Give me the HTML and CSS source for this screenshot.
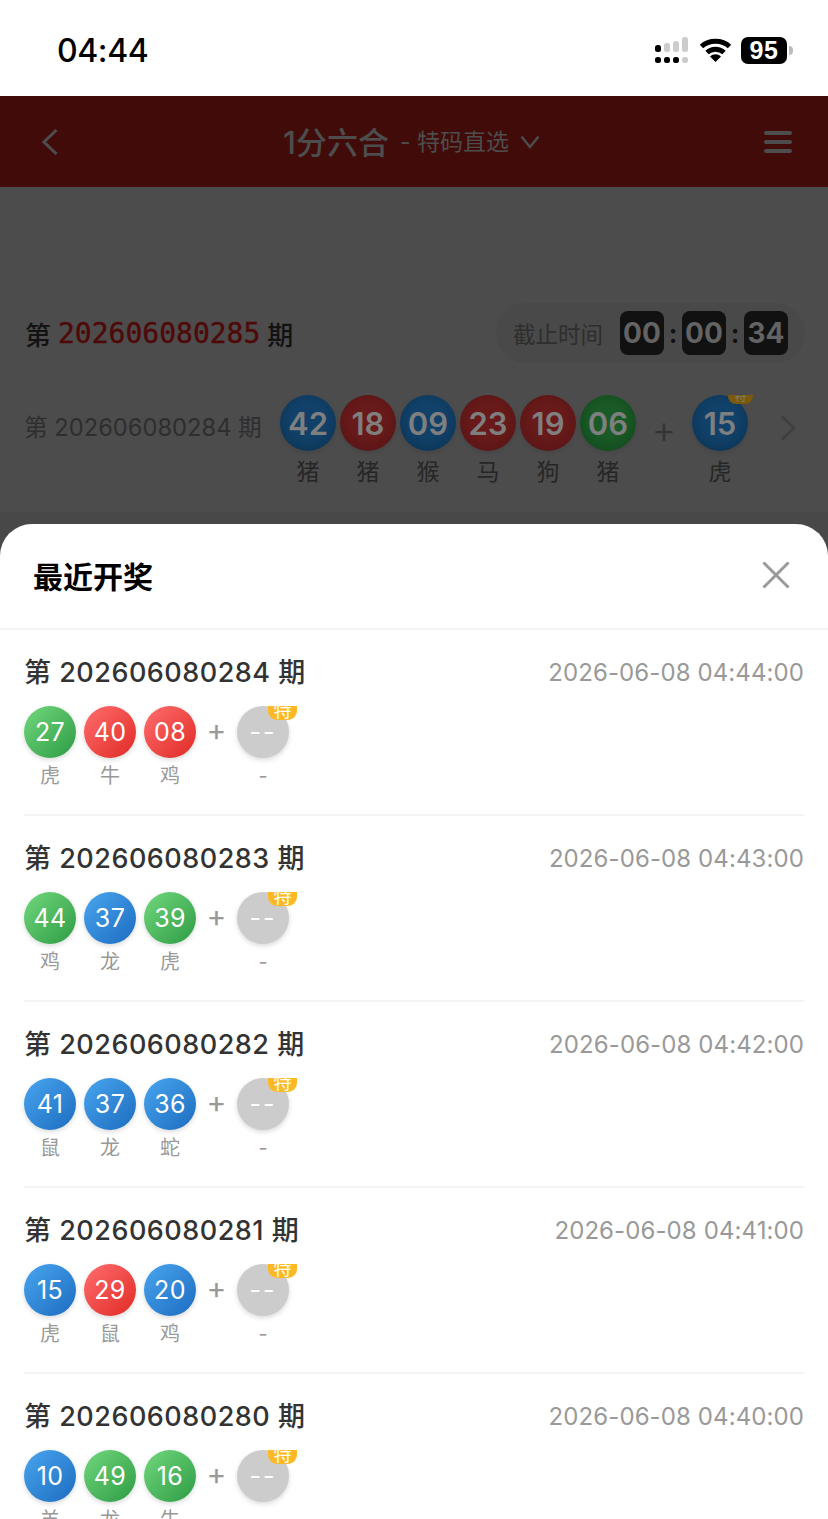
FILE: index.html
```html
<!DOCTYPE html>
<html lang="zh">
<head>
<meta charset="utf-8">
<title>最近开奖</title>
<link rel="stylesheet" href="styles.css">
</head>
<body>
<div class="page">
  <div class="status">
    <div class="clock">04:44</div>
    <div class="status-icons">
      <svg class="signal" width="33" height="26" viewBox="0 0 33 26"><g fill="#ccc"><rect x="9" y="6" width="6" height="9" rx="2.5"/><rect x="18" y="4" width="6" height="11" rx="2.5"/><rect x="27" y="0" width="6" height="15" rx="2.5"/><rect x="27" y="20" width="6" height="6" rx="2.5"/></g><g fill="#000"><rect x="0" y="8" width="6" height="7" rx="2.5"/><rect x="0" y="20" width="6" height="6" rx="2.5"/><rect x="9" y="20" width="6" height="6" rx="2.5"/><rect x="18" y="20" width="6" height="6" rx="2.5"/></g></svg>
      <svg class="wifi" width="33" height="24" viewBox="0 0 33 24"><path d="M2.500 8.500 C10 1.500 23 1.500 30.500 8.500" fill="none" stroke="#000" stroke-width="5" stroke-linecap="butt"/><path d="M8 14.500 C13 10 20 10 25 14.500" fill="none" stroke="#000" stroke-width="5" stroke-linecap="butt"/><path d="M11 18.500 C14.500 15.500 18.500 15.500 22 18.500 L16.500 24 Z" fill="#000"/></svg>
      <div class="battery"><span class="battery-level">95</span><span class="battery-cap"></span></div>
    </div>
  </div>

  <header class="header">
    <svg class="back" width="16" height="26" viewBox="0 0 16 26"><path d="M14.500 1 L2 13 L14.500 25" fill="none" stroke="#4d4d4d" stroke-width="3"/></svg>
    <div class="title">
      <span class="title-main">1分六合</span>
      <span class="title-sub">- 特码直选</span>
      <svg width="20" height="14" viewBox="0 0 20 14"><path d="M1.500 1.500 L10 12 L18.500 1.500" fill="none" stroke="#4d4d4d" stroke-width="2.500"/></svg>
    </div>
    <div class="menu"><i></i><i></i><i></i></div>
  </header>

  <section class="info">
    <div class="current">
      <div class="current-label">第 <b>202606080285</b> 期</div>
      <div class="timer">
        <span class="timer-label">截止时间</span>
        <span class="digit">00</span><span class="colon">:</span><span class="digit">00</span><span class="colon">:</span><span class="digit">34</span>
      </div>
    </div>
    <div class="last">
      <div class="last-label">第 202606080284 期</div>
      <div class="big-balls">
        <div class="big-col"><span class="big dim-blue">42</span><em>猪</em></div>
        <div class="big-col"><span class="big dim-red">18</span><em>猪</em></div>
        <div class="big-col"><span class="big dim-blue">09</span><em>猴</em></div>
        <div class="big-col"><span class="big dim-red">23</span><em>马</em></div>
        <div class="big-col"><span class="big dim-red">19</span><em>狗</em></div>
        <div class="big-col"><span class="big dim-green">06</span><em>猪</em></div>
        <span class="big-plus">+</span>
        <div class="big-col"><span class="big dim-blue"><span class="big-tag">特</span>15</span><em>虎</em></div>
      </div>
      <svg class="more" width="16" height="26" viewBox="0 0 16 26"><path d="M2 1.500 L14 13 L2 24.500" fill="none" stroke="#3f3f3f" stroke-width="2.500"/></svg>
    </div>
  </section>

  <section class="sheet">
    <div class="sheet-head">
      <h2>最近开奖</h2>
      <svg width="28" height="28" viewBox="0 0 28 28"><path d="M1.500 1.500 L26.500 26.500 M26.500 1.500 L1.500 26.500" stroke="#999" stroke-width="3" fill="none"/></svg>
    </div>

    <article class="row">
      <div class="row-head"><span class="issue">第 202606080284 期</span><time>2026-06-08 04:44:00</time></div>
      <div class="balls">
        <div class="col"><span class="ball green">27</span><em>虎</em></div>
        <div class="col"><span class="ball red">40</span><em>牛</em></div>
        <div class="col"><span class="ball red">08</span><em>鸡</em></div>
        <span class="plus">+</span>
        <div class="col"><span class="ball gray"><span class="tag">特</span>--</span><em>-</em></div>
      </div>
    </article>

    <article class="row">
      <div class="row-head"><span class="issue">第 202606080283 期</span><time>2026-06-08 04:43:00</time></div>
      <div class="balls">
        <div class="col"><span class="ball green">44</span><em>鸡</em></div>
        <div class="col"><span class="ball blue">37</span><em>龙</em></div>
        <div class="col"><span class="ball green">39</span><em>虎</em></div>
        <span class="plus">+</span>
        <div class="col"><span class="ball gray"><span class="tag">特</span>--</span><em>-</em></div>
      </div>
    </article>

    <article class="row">
      <div class="row-head"><span class="issue">第 202606080282 期</span><time>2026-06-08 04:42:00</time></div>
      <div class="balls">
        <div class="col"><span class="ball blue">41</span><em>鼠</em></div>
        <div class="col"><span class="ball blue">37</span><em>龙</em></div>
        <div class="col"><span class="ball blue">36</span><em>蛇</em></div>
        <span class="plus">+</span>
        <div class="col"><span class="ball gray"><span class="tag">特</span>--</span><em>-</em></div>
      </div>
    </article>

    <article class="row">
      <div class="row-head"><span class="issue">第 202606080281 期</span><time>2026-06-08 04:41:00</time></div>
      <div class="balls">
        <div class="col"><span class="ball blue">15</span><em>虎</em></div>
        <div class="col"><span class="ball red">29</span><em>鼠</em></div>
        <div class="col"><span class="ball blue">20</span><em>鸡</em></div>
        <span class="plus">+</span>
        <div class="col"><span class="ball gray"><span class="tag">特</span>--</span><em>-</em></div>
      </div>
    </article>

    <article class="row">
      <div class="row-head"><span class="issue">第 202606080280 期</span><time>2026-06-08 04:40:00</time></div>
      <div class="balls">
        <div class="col"><span class="ball blue">10</span><em>羊</em></div>
        <div class="col"><span class="ball green">49</span><em>龙</em></div>
        <div class="col"><span class="ball green">16</span><em>牛</em></div>
        <span class="plus">+</span>
        <div class="col"><span class="ball gray"><span class="tag">特</span>--</span><em>-</em></div>
      </div>
    </article>
  </section>
</div>
</body>
</html>
```
FILE: styles.css
```css
* { box-sizing: border-box; }
html, body { margin: 0; padding: 0; }
body { font-family: Inter, "Noto Sans CJK SC", sans-serif; background: #fff; }
em { font-style: normal; }
.page { width: 828px; height: 1519px; overflow: hidden; display: flex; flex-direction: column; background: #484848; }

.status { height: 96px; flex: none; background: #fff; display: flex; align-items: center; justify-content: space-between; padding: 4px 35px 0 57px; }
.clock { font-size: 32px; font-weight: 500; color: #000; line-height: 1; padding-top: 2px; letter-spacing: -0.4px; }
.status-icons { display: flex; align-items: center; gap: 11px; }
.wifi { margin: -1px -2px 0 0; }
.battery { display: flex; align-items: center; gap: 2px; }
.battery-level { width: 46px; height: 27px; border-radius: 7px; background: #000; color: #fff; font-size: 25px; font-weight: 700; font-family: "Liberation Sans", sans-serif; display: flex; align-items: center; justify-content: center; letter-spacing: 0.5px; }
.battery-cap { width: 4px; height: 9px; background: #bbb; border-radius: 0 4px 4px 0; }

.header { height: 91px; flex: none; background: #400b08; display: flex; align-items: center; justify-content: space-between; padding: 0 36px 0 42px; }
.title { display: flex; align-items: center; gap: 11px; color: #4d4d4d; margin-left: 1px; }
.title-main { font-size: 31px; font-weight: 500; margin-top: -2px; }
.title-sub { font-size: 23px; margin-top: -3px; }
.menu { display: flex; flex-direction: column; gap: 5px; width: 28px; }
.menu i { display: block; height: 4px; border-radius: 2px; background: #4d4d4d; }

.info { height: 325px; flex: none; background: #4c4c4c; padding: 116px 23px 0 25px; }
.current { display: flex; align-items: center; justify-content: space-between; height: 60px; }
.current-label { font-size: 26px; color: #121212; font-weight: 500; display: flex; align-items: center; gap: 7px; }
.current-label b { font-family: "DejaVu Sans Mono", monospace; font-size: 28px; color: #4e0908; font-weight: 400; -webkit-text-stroke: 0.4px #4e0908; }
.timer { display: flex; align-items: center; height: 60px; padding: 0 17px; border-radius: 30px; background: #494949; }
.timer-label { font-size: 22.5px; color: #2e2e2e; margin-right: 17px; }
.digit { width: 44px; height: 44px; border-radius: 8px; background: #111; color: #636363; font-size: 28px; font-weight: 700; display: flex; align-items: center; justify-content: center; }
.colon { width: 18px; text-align: center; color: #111; font-size: 26px; font-weight: 700; }
.last { display: flex; align-items: flex-start; margin-top: 32px; }
.last-label { font-size: 23.7px; color: #2e2e2e; width: 256px; margin: 14px 0 0 -1px; white-space: nowrap; }
.big-balls { display: flex; }
.big-col { width: 56px; margin-right: 4px; display: flex; flex-direction: column; align-items: center; }
.big-col em { font-size: 23px; color: #262626; margin-top: 2px; }
.big { position: relative; width: 56px; height: 56px; border-radius: 50%; color: #7f7f7f; font-size: 31px; font-weight: 600; display: flex; align-items: center; justify-content: center; box-shadow: 0 2px 4px rgba(0,0,0,.1); clip-path: inset(0 -10px -10px -10px); }
.dim-blue { background: radial-gradient(circle at 50% 45%, #114169 40%, #0a3050); }
.dim-red { background: radial-gradient(circle at 50% 45%, #681a1a 40%, #541212); }
.dim-green { background: radial-gradient(circle at 50% 45%, #1a5a26 40%, #0e4419); }
.big-plus { width: 48px; margin-right: 4px; text-align: center; color: #333; font-size: 38px; font-weight: 300; line-height: 68px; }
.big-tag { position: absolute; top: 0; right: -5px; width: 25px; height: 9px; overflow: hidden; background: #7a5a0a; color: #7f7f7f; font-size: 12px; font-weight: 400; text-align: center; line-height: 4px; border-radius: 0 0 8px 8px; }
.more { margin: 20px 0 0 28px; }

.sheet { flex: none; margin-top: 12px; background: #fff; border-radius: 32px 32px 0 0; }
.sheet-head { height: 106px; display: flex; align-items: center; justify-content: space-between; padding: 0 38px 2px 33px; border-bottom: 2px solid #f3f3f3; }
.sheet-head h2 { margin: 0; font-size: 30px; font-weight: 700; color: #000; }
.row { height: 186px; margin: 0 24px; padding-top: 20px; border-bottom: 2px solid #f3f3f3; }
.row-head { display: flex; align-items: center; justify-content: space-between; height: 44px; }
.issue { font-size: 27px; font-weight: 500; color: #333; letter-spacing: 0.5px; margin-top: -4px; }
.row-head time { font-size: 24px; color: #999; letter-spacing: 0.1px; }
.balls { display: flex; align-items: flex-start; margin-top: 12px; gap: 8px; }
.col { width: 52px; display: flex; flex-direction: column; align-items: center; }
.col em { font-size: 20px; line-height: 28px; color: #999; margin-top: 4px; }
.ball { position: relative; width: 52px; height: 52px; border-radius: 50%; color: #fff; font-size: 25px; letter-spacing: 0.4px; display: flex; align-items: center; justify-content: center; box-shadow: 0 2px 5px rgba(0,0,0,.15); }
.green { background: linear-gradient(135deg, #72d77c, #2d9c45); }
.red { background: linear-gradient(135deg, #ff6e6e, #e02a25); }
.blue { background: linear-gradient(135deg, #4aa5ee, #1b6cc0); }
.gray { background: #ccc; clip-path: inset(0 -10px -10px -10px); letter-spacing: 2px; }
.plus { width: 25px; text-align: center; color: #999; font-size: 30px; line-height: 48px; }
.tag { position: absolute; top: 0; right: -8px; width: 29px; height: 14px; overflow: hidden; background: #fdb925; color: #fff; font-size: 18px; line-height: 10px; text-align: center; border-radius: 0 0 9px 9px; letter-spacing: 0; }
```
